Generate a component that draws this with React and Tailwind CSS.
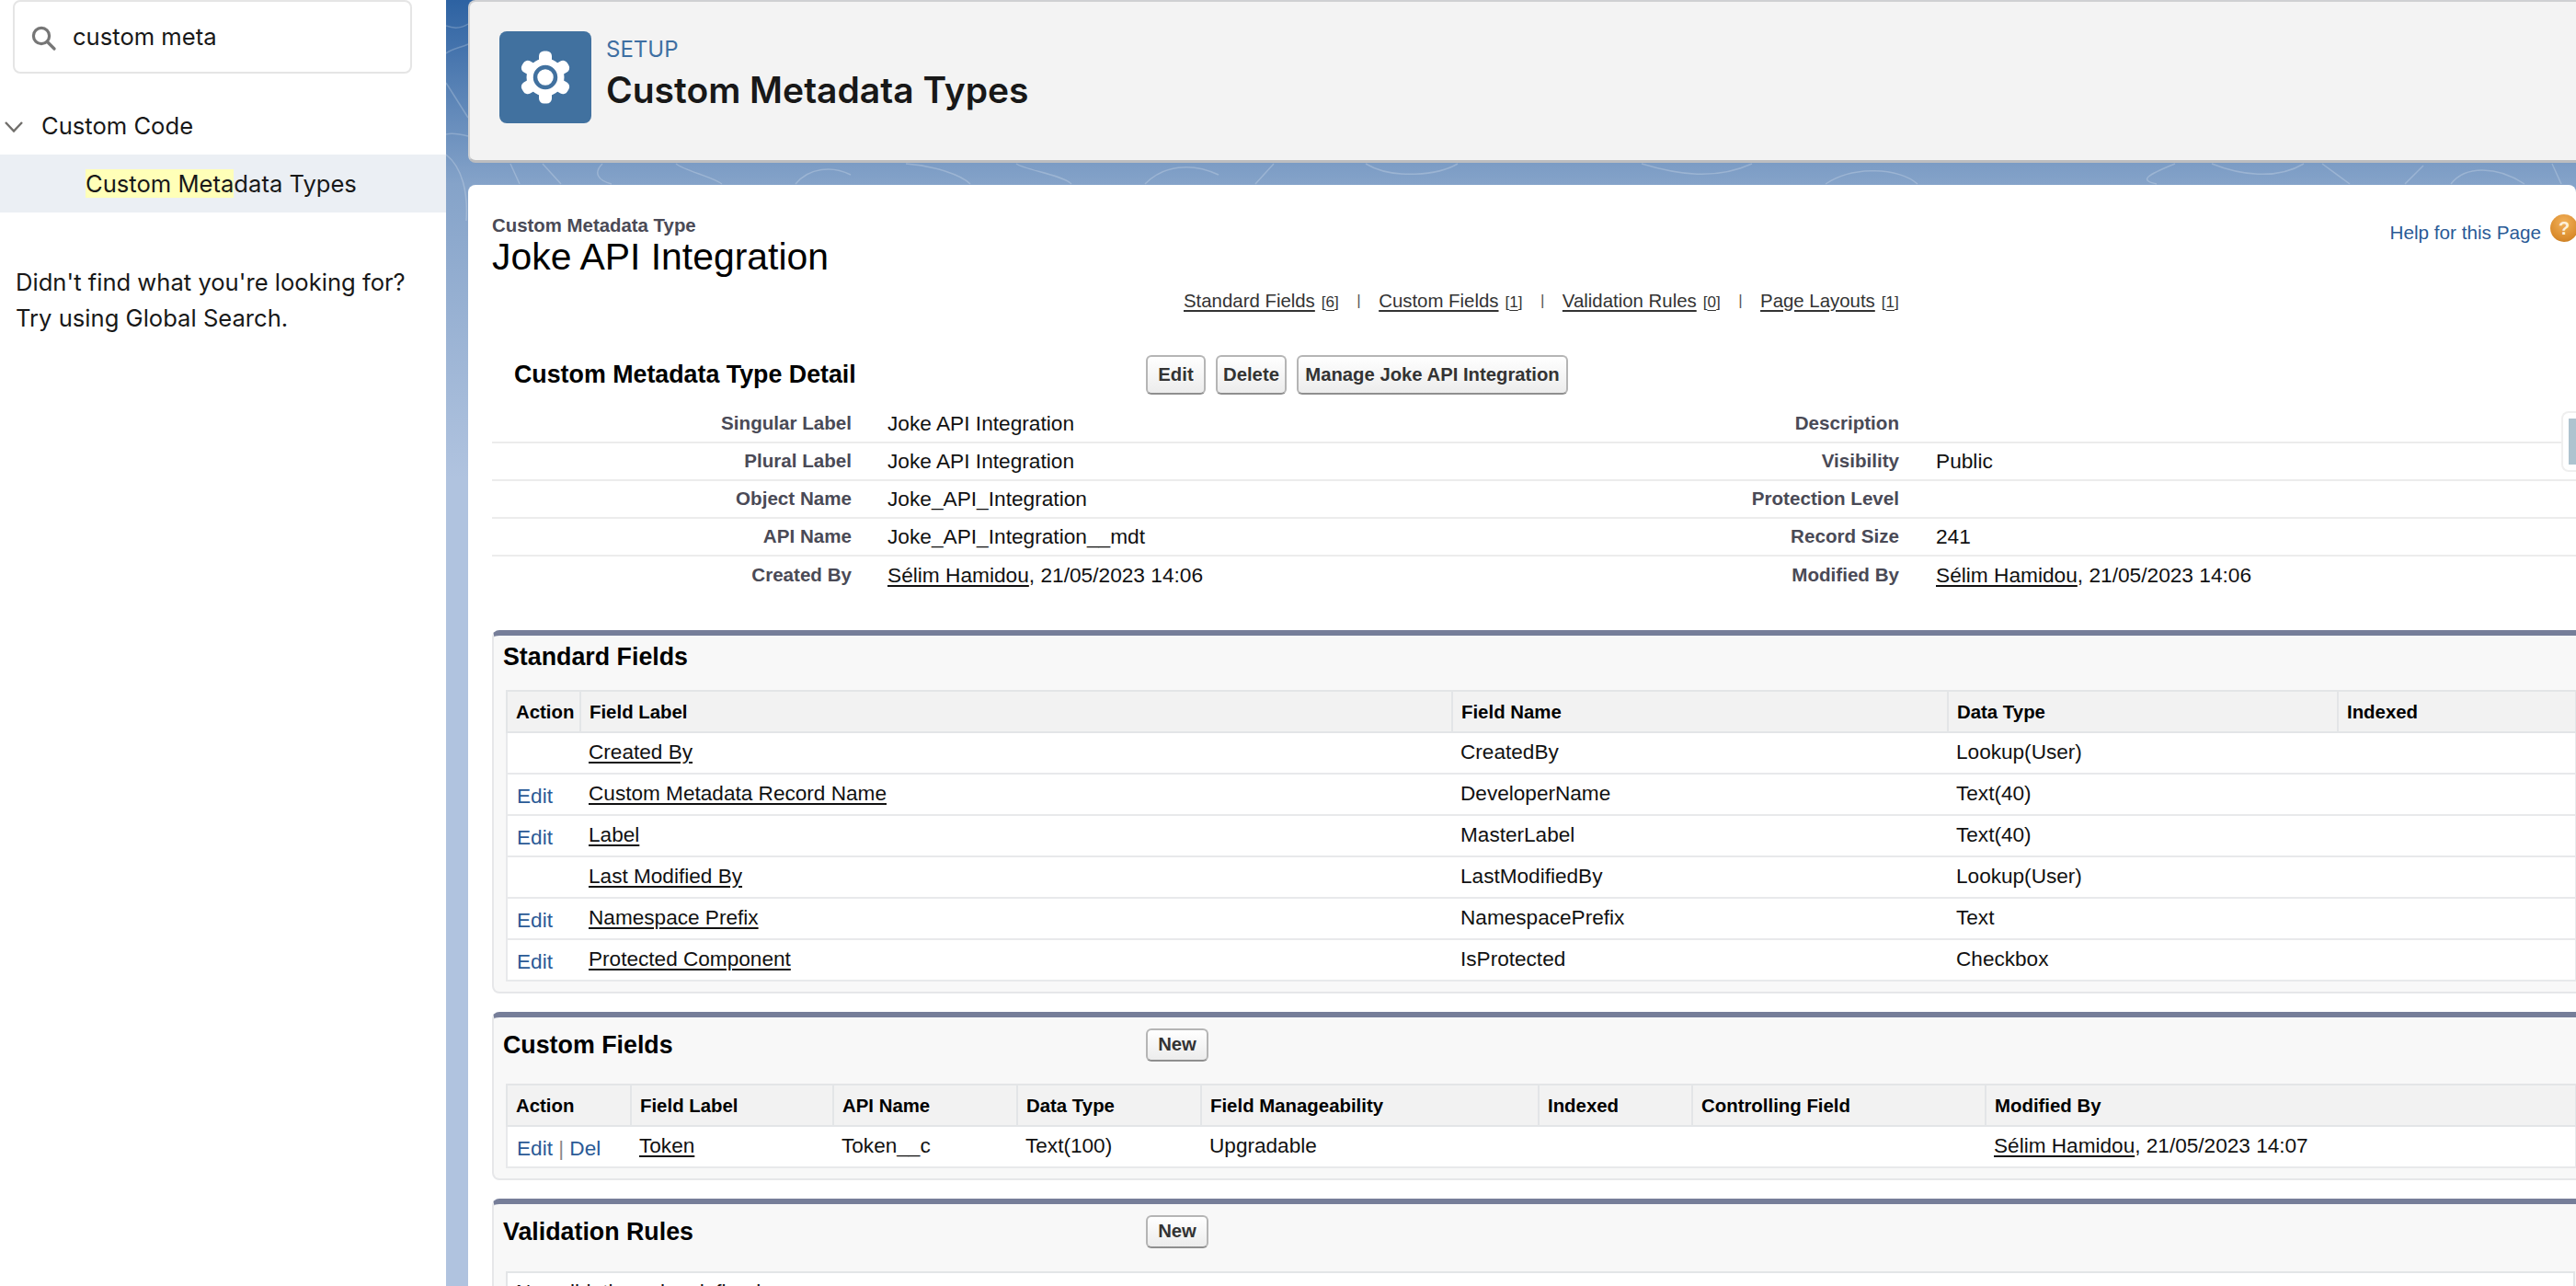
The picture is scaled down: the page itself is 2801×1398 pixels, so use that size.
import React from 'react';

const detailRows = [
  { label: 'Singular Label', value: 'Joke API Integration', label2: 'Description', value2: '' },
  { label: 'Plural Label', value: 'Joke API Integration', label2: 'Visibility', value2: 'Public' },
  { label: 'Object Name', value: 'Joke_API_Integration', label2: 'Protection Level', value2: '' },
  { label: 'API Name', value: 'Joke_API_Integration__mdt', label2: 'Record Size', value2: '241' },
];

const standardFields = [
  { edit: false, label: 'Created By', name: 'CreatedBy', type: 'Lookup(User)' },
  { edit: true, label: 'Custom Metadata Record Name', name: 'DeveloperName', type: 'Text(40)' },
  { edit: true, label: 'Label', name: 'MasterLabel', type: 'Text(40)' },
  { edit: false, label: 'Last Modified By', name: 'LastModifiedBy', type: 'Lookup(User)' },
  { edit: true, label: 'Namespace Prefix', name: 'NamespacePrefix', type: 'Text' },
  { edit: true, label: 'Protected Component', name: 'IsProtected', type: 'Checkbox' },
];

const jumpLinks = [
  { name: 'Standard Fields', count: 6 },
  { name: 'Custom Fields', count: 1 },
  { name: 'Validation Rules', count: 0 },
  { name: 'Page Layouts', count: 1 },
];

const Btn = ({ children, className = '' }) => (
  <button className={`flex items-center justify-center rounded-[6px] border-2 border-[#b5b5b5] border-b-[#8f8f8f] bg-gradient-to-b from-white to-[#ececec] text-[20.3px] font-bold text-[#333] ${className}`}>
    {children}
  </button>
);

const UserLink = ({ stamp }) => (
  <span>
    <span className="underline decoration-2 underline-offset-[3px]">Sélim Hamidou</span>, 21/05/2023 {stamp}
  </span>
);

const Th = ({ children }) => (
  <th className="border-2 border-[#e3e5e7] bg-[#f2f2f2] pl-[9px] pt-[1px] text-left align-middle text-[20.4px] font-bold text-black">
    {children}
  </th>
);

const Td = ({ children }) => (
  <td className="border-y-2 border-[#e8e9eb] pb-[2px] pl-[9px] align-middle text-[22.6px] text-[#111] first:border-l-2 last:border-r-2">
    {children}
  </td>
);

const ActionTd = ({ children }) => (
  <td className="border-y-2 border-l-2 border-[#e8e9eb] pl-[10px] pt-[4px] align-middle text-[22.6px] text-[#2a5a96]">
    {children}
  </td>
);

const Section = ({ title, hasNew, titleClass, children }) => (
  <section className="w-[2276px] rounded-[8px] border-x-2 border-t-[6px] border-b-2 border-x-[#e6e7e9] border-t-[#767e99] border-b-[#e6e7e9] bg-[#f8f8f8]">
    <div className={`flex items-center ${titleClass}`}>
      <h3 className="w-[709px] pl-[10px] pt-[2px] text-[26.8px] font-bold text-black">{title}</h3>
      {hasNew && <Btn className="h-[36px] w-[68px]">New</Btn>}
    </div>
    {children}
  </section>
);

const Gear = () => (
  <svg width="60" height="60" viewBox="0 0 60 60">
    {[0, 60, 120, 180, 240, 300].map((a) => (
      <rect key={a} x="23" y="1.5" width="14" height="16" rx="5.5" fill="#fff" transform={`rotate(${a} 30 30)`} />
    ))}
    <circle cx="30" cy="30" r="20.5" fill="#fff" />
    <circle cx="30" cy="30" r="11" fill="none" stroke="#41719f" strokeWidth="4.5" />
  </svg>
);

export default function App() {
  return (
    <div className="flex h-[1398px] w-[2801px] overflow-hidden bg-white font-['Liberation_Sans',sans-serif]">
      {/* Setup quick find */}
      <aside className="w-[485px] shrink-0 bg-white font-['Inter',sans-serif] text-[25.6px] text-[#181818]">
        <div className="ml-[14px] flex h-[80px] w-[434px] items-center rounded-[8px] border-2 border-[#e5e5e5] pl-[18px]">
          <svg width="27" height="27" viewBox="0 0 27 27" fill="none" stroke="#767676" strokeWidth="3.2" strokeLinecap="round" className="mt-[3px]">
            <circle cx="11" cy="11" r="8.6" />
            <path d="M17.5 17.5 L25 25" />
          </svg>
          <span className="ml-[18px] mt-[1px]">custom meta</span>
        </div>
        <div className="mt-[37px] flex h-[39px] items-center">
          <svg width="20" height="12" viewBox="0 0 20 12" fill="none" stroke="#706e6b" strokeWidth="2.4" className="ml-[5px] mt-[3px]">
            <path d="M1 1 L10 10.5 L19 1" />
          </svg>
          <span className="ml-[20px] mt-[1px]">Custom Code</span>
        </div>
        <div className="mt-[12px] flex h-[63px] items-center bg-[#ebeff4] pl-[93px] pt-[1px]">
          <span>
            <span className="bg-[#ffffb8]">Custom Meta</span>data Types
          </span>
        </div>
        <p className="mt-[56px] pl-[17px] leading-[39px]">
          Didn't find what you're looking for?
          <br />
          Try using Global Search.
        </p>
      </aside>

      <main className="relative min-w-0 flex-1 bg-[linear-gradient(180deg,#2d62a2_0,#85a3c9_200px,#b0c3df_520px)] pl-[24px]">
        {/* background contour lines */}
        <svg className="absolute left-0 top-0" width="2316" height="270" fill="none" stroke="#ffffff" strokeOpacity="0.22" strokeWidth="1.5">
          <path d="M0 28 C10 32 18 30 24 26" />
          <path d="M0 58 C8 52 16 52 24 48" />
          <path d="M0 90 L24 128" />
          <path d="M0 146 C8 144 16 146 24 148" />
          <path d="M0 168 C18 182 24 210 22 240" />
          <path d="M70 178 L80 200 M105 178 L125 200 M170 178 C160 188 165 196 180 200 M250 178 C260 186 290 192 300 200" />
          <path d="M380 200 C395 182 420 180 440 190 M500 178 C530 180 560 190 570 200 M620 178 C630 185 670 190 680 200" />
          <path d="M760 200 C780 180 810 176 840 190 M900 178 L880 200 M1000 178 C1030 196 1080 190 1100 178" />
          <path d="M1300 178 C1340 190 1380 196 1420 178 M1500 200 C1530 180 1580 182 1600 200" />
          <path d="M1880 178 C1850 190 1840 196 1860 200 M1920 178 C1950 190 1990 196 2020 178 M2040 178 L2070 200" />
          <path d="M2130 200 L2150 180 M2180 200 C2195 180 2230 180 2260 200 M2290 178 L2300 200" />
        </svg>

        {/* Page header */}
        <header className="relative flex h-[177px] w-[2300px] items-center rounded-[8px] border-2 border-[#cfd0d2] border-b-[3px] border-b-[#bcbdbf] bg-[#f3f3f3] pl-[32px]">
          <div className="mb-[8px] flex h-[100px] w-[100px] items-center justify-center rounded-[8px] bg-[#41719f]">
            <Gear />
          </div>
          <div className="mb-[13px] ml-[16px] font-['Inter',sans-serif]">
            <div className="text-[24px] leading-[30px] text-[#3e6fa2]">SETUP</div>
            <h1 className="mt-[3px] text-[39px] font-semibold leading-[52px] text-[#181818]">Custom Metadata Types</h1>
          </div>
        </header>

        {/* Page body */}
        <div className="relative mt-[24px] h-[1300px] rounded-t-[8px] bg-white pl-[26px] pt-[32px] text-[22.7px] text-[#111]">
          <div className="flex items-start justify-between">
            <div>
              <div className="text-[20.4px] font-bold leading-[24px] text-[#4a4a56]">Custom Metadata Type</div>
              <h2 className="text-[40.9px] leading-[45px] text-black">Joke API Integration</h2>
            </div>
            <div className="-mr-[2px] flex items-start">
              <a className="mt-[8px] text-[20.7px] leading-[24px] text-[#2a5a96]">Help for this Page</a>
              <span className="ml-[10px] flex h-[30px] w-[30px] items-center justify-center rounded-full bg-[radial-gradient(circle_at_50%_30%,#f2b15a,#d98a2b_70%,#b8741f)] text-[20px] font-bold text-[#fdf0da]">?</span>
            </div>
          </div>

          {/* Jump links */}
          <nav className="ml-[752px] mt-[10px] flex h-[30px] items-center text-[20.4px] text-[#333]">
            {jumpLinks.map((link, i) => (
              <React.Fragment key={link.name}>
                {i > 0 && <span className="px-[19.5px] text-[17px] text-[#555]">|</span>}
                <span>
                  <span className="underline underline-offset-[3px]">{link.name}</span>
                  <span className="ml-[7px] text-[17px]">
                    [<span className="underline underline-offset-[3px]">{link.count}</span>]
                  </span>
                </span>
              </React.Fragment>
            ))}
          </nav>

          {/* Detail */}
          <div className="mt-[44px] flex h-[43px] items-center">
            <h3 className="w-[711px] pl-[24px] text-[26.8px] font-bold text-black">Custom Metadata Type Detail</h3>
            <div className="flex gap-[11px]">
              <Btn className="h-[43px] w-[65px]">Edit</Btn>
              <Btn className="h-[43px] w-[77px]">Delete</Btn>
              <Btn className="h-[43px] w-[295px]">Manage Joke API Integration</Btn>
            </div>
          </div>
          <div className="mt-[12px]">
            {detailRows.map((row) => (
              <div key={row.label} className="flex h-[41px] items-center border-b-2 border-[#ececec]">
                <div className="w-[391px] text-right text-[20.6px] font-bold text-[#4a4a56]">{row.label}</div>
                <div className="w-[775px] pl-[39px]">{row.value}</div>
                <div className="w-[364px] text-right text-[20.6px] font-bold text-[#4a4a56]">{row.label2}</div>
                <div className="pl-[40px]">{row.value2}</div>
              </div>
            ))}
            <div className="flex h-[41px] items-center">
              <div className="w-[391px] text-right text-[20.6px] font-bold text-[#4a4a56]">Created By</div>
              <div className="w-[775px] pl-[39px]"><UserLink stamp="14:06" /></div>
              <div className="w-[364px] text-right text-[20.6px] font-bold text-[#4a4a56]">Modified By</div>
              <div className="pl-[40px]"><UserLink stamp="14:06" /></div>
            </div>
          </div>

          {/* Related lists */}
          <div className="mt-[39px] flex flex-col gap-[20px]">
            <Section title="Standard Fields" titleClass="h-[44px] mb-[15px]">
              <table className="mb-[11px] ml-[13px] w-[2250px] table-fixed border-collapse bg-white">
                <colgroup>
                  <col className="w-[80px]" />
                  <col className="w-[948px]" />
                  <col className="w-[539px]" />
                  <col className="w-[424px]" />
                  <col className="w-[259px]" />
                </colgroup>
                <thead>
                  <tr className="h-[45px]">
                    <Th>Action</Th>
                    <Th>Field Label</Th>
                    <Th>Field Name</Th>
                    <Th>Data Type</Th>
                    <Th>Indexed</Th>
                  </tr>
                </thead>
                <tbody>
                  {standardFields.map((f) => (
                    <tr key={f.name} className="h-[45px]">
                      <ActionTd>{f.edit ? 'Edit' : ''}</ActionTd>
                      <Td>
                        <span className="underline decoration-2 underline-offset-[3px]">{f.label}</span>
                      </Td>
                      <Td>{f.name}</Td>
                      <Td>{f.type}</Td>
                      <Td />
                    </tr>
                  ))}
                </tbody>
              </table>
            </Section>

            <Section title="Custom Fields" hasNew titleClass="h-[59px] mb-[13px]">
              <table className="mb-[11px] ml-[13px] w-[2250px] table-fixed border-collapse bg-white">
                <colgroup>
                  <col className="w-[135px]" />
                  <col className="w-[220px]" />
                  <col className="w-[200px]" />
                  <col className="w-[200px]" />
                  <col className="w-[367px]" />
                  <col className="w-[167px]" />
                  <col className="w-[319px]" />
                  <col className="w-[642px]" />
                </colgroup>
                <thead>
                  <tr className="h-[45px]">
                    <Th>Action</Th>
                    <Th>Field Label</Th>
                    <Th>API Name</Th>
                    <Th>Data Type</Th>
                    <Th>Field Manageability</Th>
                    <Th>Indexed</Th>
                    <Th>Controlling Field</Th>
                    <Th>Modified By</Th>
                  </tr>
                </thead>
                <tbody>
                  <tr className="h-[45px]">
                    <ActionTd>
                      Edit <span className="text-[#888]">|</span> Del
                    </ActionTd>
                    <Td>
                      <span className="underline decoration-2 underline-offset-[3px]">Token</span>
                    </Td>
                    <Td>Token__c</Td>
                    <Td>Text(100)</Td>
                    <Td>Upgradable</Td>
                    <Td />
                    <Td />
                    <Td><UserLink stamp="14:07" /></Td>
                  </tr>
                </tbody>
              </table>
            </Section>

            <Section title="Validation Rules" hasNew titleClass="h-[59px] mb-[14px]">
              <div className="ml-[13px] w-[2250px] border-2 border-[#e3e5e7] bg-white pl-[9px] pt-[6px] text-[22.6px] leading-[30px] text-[#111]">
                No validation rules defined.
              </div>
            </Section>
          </div>
        </div>

        {/* Floating side handle */}
        <div className="absolute right-0 top-[447px] flex h-[66px] w-[16px] items-center justify-end rounded-l-[8px] border-2 border-r-0 border-[#efefef] bg-white">
          <div className="h-[50px] w-[8px] bg-[#aec3cf]" />
        </div>
      </main>
    </div>
  );
}
